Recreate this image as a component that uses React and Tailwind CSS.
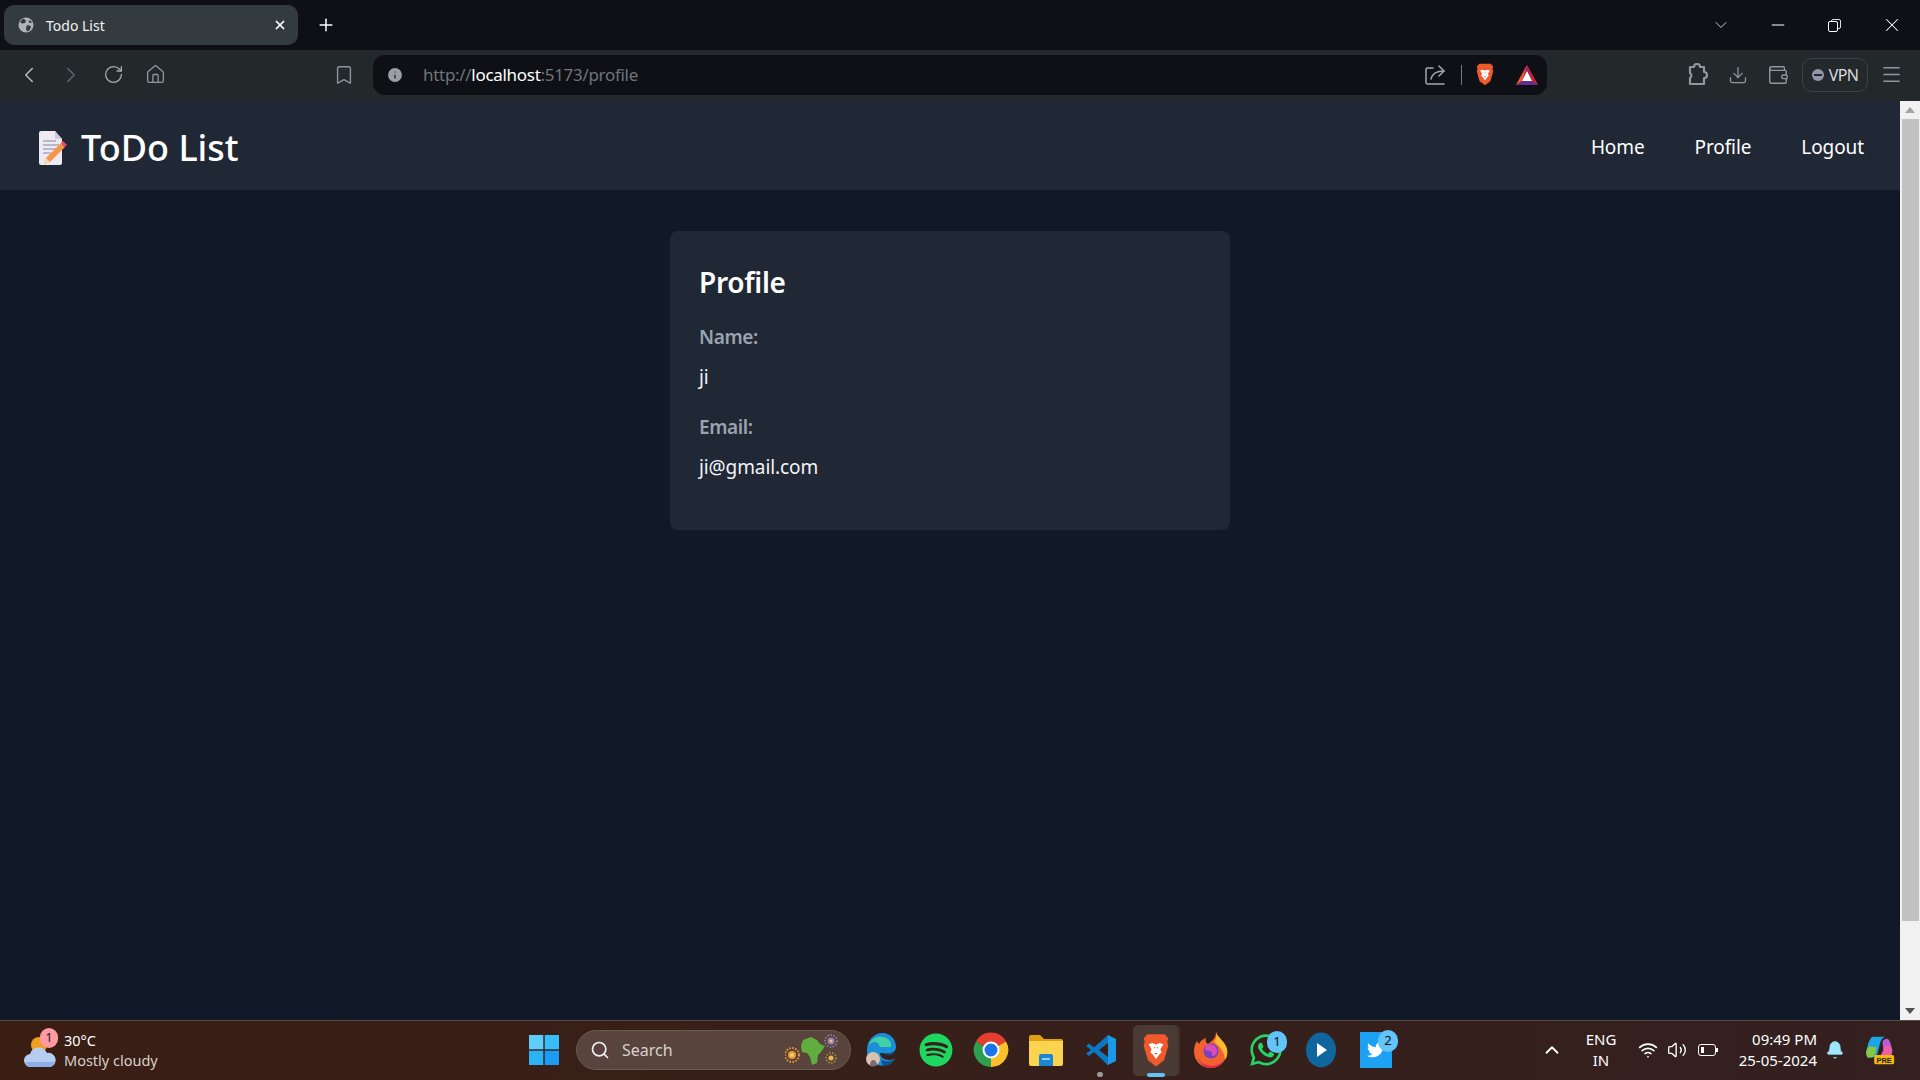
import {
  ChevronLeft,
  ChevronRight,
  RotateCw,
  Home,
  Bookmark,
  Info,
  Download,
  Wallet,
  Menu,
  X,
  Plus,
  ChevronDown,
  ChevronUp,
  Minus,
  Search,
  Wifi,
  Volume2,
  Bell,
} from 'lucide-react'
import { FaSpotify, FaWhatsapp, FaTwitter } from 'react-icons/fa'

const font = "font-['Noto_Sans','Open_Sans',sans-serif]"

function Globe() {
  return (
    <svg width="16" height="16" viewBox="0 0 16 16">
      <circle cx="8" cy="8" r="7.5" fill="#aeb3b6" />
      <path d="M5 1.5 8 3.5 7 6 4 6.5 2 5ZM9 8l4 1-1 4-3 1.500-1-3ZM12 3l2 2.500-2 .5-1.500-1.500Z" fill="#343b3e" />
    </svg>
  )
}

function ShareIcon() {
  return (
    <svg width="22" height="22" viewBox="0 0 22 22" fill="none" stroke="#a3a8ab" strokeWidth="1.500" strokeLinecap="round" strokeLinejoin="round">
      <path d="M9 4H3a2 2 0 0 0-1 2v13a2 2 0 0 0 2 1h16" />
      <path d="M7 15c1-5 5-8 13-8" />
      <path d="M15 2l5 5-5 5" />
    </svg>
  )
}

function BraveLogo({ size = 20 }) {
  return (
    <svg width={size} height={size * 1.16} viewBox="0 0 24 28">
      <path d="M5 1h14l3 3.500-1 2.500 1 3-3.500 12L12 27l-6.500-5L2 10l1-3-1-2.500Z" fill="#f0592b" />
      <path d="M6 9l3-1 3 1.200L15 8l3 1-2.500 4 1 2.500-2 2L12 21l-2.500-3.500-2-2 1-2.500Z" fill="#fff" />
      <path d="M10 11.500h1.500l-.7 1.200ZM12.500 11.500H14l-.8 1.200ZM10.500 16h3L12 17.500Z" fill="#f0592b" />
    </svg>
  )
}

function BatLogo() {
  return (
    <svg width="24" height="22" viewBox="0 0 24 22">
      <path d="M12 1 23 21H1Z" fill="#9e1f63" />
      <path d="M12 1 1 21l6-4Z" fill="#f15a22" />
      <path d="M12 1 23 21l-6-4Z" fill="#c1272d" />
      <path d="M1 21h22l-6-4H7Z" fill="#662d91" />
      <path d="M12 7l5 10H7Z" fill="#fff" />
    </svg>
  )
}

function Memo() {
  return (
    <svg width="30" height="34" viewBox="0 0 30 34">
      <path d="M2 2a2 2 0 0 1 2-2h14l7 8v24a2 2 0 0 1-2 2H4a2 2 0 0 1-2-2Z" fill="#eeeaf4" />
      <path d="M18 0l7 8h-7Z" fill="#cfcad9" />
      <path d="M6 10h13M6 14h16M6 18h13M6 22h8" stroke="#a9a6b6" strokeWidth="1.600" />
      <path d="M24 12l4 4-15 15-6 2 2-6Z" fill="#f4974b" />
      <path d="M24 12l2-2 4 4-2 2Z" fill="#e8486a" />
      <path d="M9 27l4 4-6 2Z" fill="#f7d9ae" />
    </svg>
  )
}

function WindowsLogo() {
  return (
    <svg width="30" height="30" viewBox="0 0 30 30">
      <rect x="0" y="0" width="14.300" height="14.300" fill="#5fcdfb" />
      <rect x="15.700" y="0" width="14.300" height="14.300" fill="#38bdfb" />
      <rect x="0" y="15.700" width="14.300" height="14.300" fill="#2cb3f6" />
      <rect x="15.700" y="15.700" width="14.300" height="14.300" fill="#1a9cf2" />
    </svg>
  )
}

function Weather() {
  return (
    <svg width="32" height="38" viewBox="0 0 32 38">
      <circle cx="15" cy="14" r="8" fill="#f0a020" />
      <path d="M7 36a6.500 6.500 0 0 1-1-13 9 9 0 0 1 17-1 7 7 0 0 1 3 14Z" fill="#b4cdf0" />
      <path d="M7 36a6.500 6.500 0 0 1-6-5h30a7 7 0 0 1-5 5Z" fill="#8fb0e6" />
    </svg>
  )
}

function SearchArt() {
  return (
    <svg width="56" height="34" viewBox="0 0 56 34">
      <path d="M18 7l8-3 6 3 3 4 5 2-4 6-3 3-1 8-5 2-2-8-3-4-5-1-1-6Z" fill="#5fae3e" />
      <circle cx="7" cy="22" r="7" fill="none" stroke="#e8963a" strokeWidth="2" strokeDasharray="1.500 1.500" />
      <circle cx="7" cy="22" r="4" fill="#e8963a" />
      <circle cx="7" cy="22" r="2" fill="#f6cf5d" />
      <circle cx="46" cy="8" r="6" fill="none" stroke="#9b7fb8" strokeWidth="1.500" strokeDasharray="1.500 1.500" />
      <circle cx="46" cy="8" r="3.500" fill="#9b7fb8" />
      <circle cx="46" cy="8" r="1.500" fill="#e9c66c" />
      <circle cx="46" cy="25" r="5" fill="none" stroke="#b98c4a" strokeWidth="1.500" strokeDasharray="1.500 1.500" />
      <circle cx="46" cy="25" r="2.500" fill="#e8b84a" />
    </svg>
  )
}

function EdgeLogo() {
  return (
    <svg width="32" height="36" viewBox="0 0 32 36">
      <path d="M2 17C3 6 11 1 17 1c9 0 14 7 14 14 0 4-3 6-7 6h-9c0 4 4 7 9 7 2 0 4-.5 6-1.500-3 5-7 7-12 7C8 34 1 27 2 17Z" fill="#1b8fd8" />
      <path d="M3 14C6 6 12 4 18 5c6 1 9 5 8 10h-11C13 8 7 9 3 14Z" fill="#3fd0a8" />
      <path d="M15 21h9c2 0 4-.500 5.500-2-1 3-3 4-6 4ZM16 27c3 3 8 3 14 0-3 5-7 7-12 7Z" fill="#11508f" />
      <circle cx="8" cy="27" r="7" fill="#d9c3ae" />
      <path d="M5 34c0-4 1-6 3-6s4 2 4 5a7 7 0 0 1-7 1Z" fill="#7d6a70" />
    </svg>
  )
}

function ChromeLogo() {
  return (
    <svg width="36" height="36" viewBox="0 0 36 36">
      <path d="M18 18 3 9.500A17 17 0 0 1 33 9.500Z" fill="#e53e30" />
      <path d="M18 18 33 9.500A17 17 0 0 1 18 35Z" fill="#fbc02d" />
      <path d="M18 18 18 35A17 17 0 0 1 3 9.500Z" fill="#2e9e4f" />
      <circle cx="18" cy="18" r="8.500" fill="#fff" />
      <circle cx="18" cy="18" r="6.500" fill="#1a73e8" />
    </svg>
  )
}

function FolderLogo() {
  return (
    <svg width="36" height="32" viewBox="0 0 36 32">
      <path d="M1 3a2 2 0 0 1 2-2h9l4 4h17a2 2 0 0 1 2 2v4H1Z" fill="#e0a010" />
      <path d="M1 7h34v23a2 2 0 0 1-2 2H3a2 2 0 0 1-2-2Z" fill="#fbd34f" />
      <path d="M11 22a2 2 0 0 1 2-2h10a2 2 0 0 1 2 2v10H11Z" fill="#1d86d0" />
      <path d="M14 25h8" stroke="#8fd0f5" strokeWidth="2" />
    </svg>
  )
}

function VsCodeLogo() {
  return (
    <svg width="32" height="32" viewBox="0 0 32 32">
      <path d="M23 1l8 4v22l-8 4-13-13.500 13-9.500Z" fill="#1c98e8" />
      <path d="M23 1v30L9 18l-5 4-3-2.500L6 16 1 12l3-2.500 5 4Z" fill="#0b78c4" />
      <path d="M23 9 14 16l9 7Z" fill="#3a1e14" />
    </svg>
  )
}

function FirefoxLogo() {
  return (
    <svg width="36" height="38" viewBox="0 0 36 38">
      <path d="M23 1c1 5 9 9 11 17 1 10-6 19-16 19S1 30 1 20c0-4 1-7 3-10l2 3c1-3 4-5 7-6-1 3 0 5 2 6 4-3 8-6 8-12Z" fill="#f2622e" />
      <path d="M23 1c1 5 9 9 11 17 1 4 0 8-2 11 0-9-6-14-11-18 2-3 3-6 2-10Z" fill="#fbb92f" />
      <path d="M5 27c3 6 9 8 14 8 5 0 10-3 13-7-3 6-8 9-14 9-6 0-11-4-13-10Z" fill="#e3224f" />
      <circle cx="18" cy="20" r="7.500" fill="#7b3fc2" />
      <path d="M13 14c5-2 11 1 11 6 0 3-2 5-5 5 1-3-1-6-6-5-1-2-1-4 0-6Z" fill="#d84fb3" />
    </svg>
  )
}

function PlayLogo() {
  return (
    <svg width="32" height="36" viewBox="0 0 32 36">
      <ellipse cx="16" cy="18" rx="15" ry="17.500" fill="#0f659e" />
      <path d="M12 11l10 7-10 7Z" fill="#fff" />
    </svg>
  )
}

function CopilotLogo() {
  return (
    <svg width="30" height="30" viewBox="0 0 36 36">
      <path d="M10 2h14c-3 1-5 4-6 8l-3 12c-1 3-3 5-6 5H3c-2-3-2-8 0-13 1-6 4-12 7-12Z" fill="#1aa6e6" />
      <path d="M3 16c2-3 4-3 6-2l5 1-2 8c-1 3-3 4-6 4H3c-2-4-2-8 0-11Z" fill="#8ac63f" />
      <path d="M21 8c2-3 4-4 7-3 2 2 3 6 4 10 2 5 0 10-3 11H16c3-1 5-4 6-8Z" fill="#b75bd8" />
      <path d="M24 13h6c2 3 3 7 2 10-2 3-5 3-9 3h-7c3-1 5-4 6-8Z" fill="#ef5fa7" />
      <rect x="11" y="24" width="24" height="11" rx="2" fill="#f3b70e" />
      <text x="23" y="33" textAnchor="middle" fontSize="9" fontWeight="800" fill="#222" fontFamily="Liberation Sans">PRE</text>
    </svg>
  )
}

// fixed-width slot so the icons keep even spacing in the bars
function Slot({ className = 'w-[42px]', children }) {
  return <div className={`flex h-full shrink-0 items-center justify-center ${className}`}>{children}</div>
}

function TabStrip() {
  return (
    <div className="flex h-[50px] shrink-0 items-center bg-[#0e1015] pl-1 text-white">
      <div className="flex h-10 w-[294px] items-center rounded-[10px] bg-[#343b3e] pl-[14px] pr-[11px]">
        <Globe />
        <span className="ml-3 flex-1 text-[14px] text-[#f1f2f2]">Todo List</span>
        <X size={14} strokeWidth={3} />
      </div>
      <Slot className="ml-[7px] w-[42px]">
        <Plus size={20} strokeWidth={1.800} />
      </Slot>
      <div className="flex-1" />
      <Slot className="w-[57px]">
        <ChevronDown size={20} strokeWidth={1.2} className="text-[#c8cacc]" />
      </Slot>
      <Slot className="w-[57px]">
        <Minus size={20} strokeWidth={1.2} />
      </Slot>
      <Slot className="w-[57px]">
        <div className="relative h-[13px] w-[13px]">
          <div className="absolute left-[3px] top-0 h-[10px] w-[10px] rounded-[2px] border border-[#ddd]" />
          <div className="absolute bottom-0 left-0 h-[11px] w-[10px] rounded-[2px] border border-white bg-[#0e1015]" />
        </div>
      </Slot>
      <Slot className="w-[57px]">
        <X size={22} strokeWidth={1.1} />
      </Slot>
    </div>
  )
}

function Toolbar() {
  const icon = 'text-[#8f979c]'
  return (
    <div className="flex h-[51px] shrink-0 items-center bg-[#23282b] pb-[2px] pl-2">
      <Slot>
        <ChevronLeft size={26} strokeWidth={1.4} className="text-[#b5babd]" />
      </Slot>
      <Slot>
        <ChevronRight size={26} strokeWidth={1.4} className="text-[#5f666a]" />
      </Slot>
      <Slot>
        <RotateCw size={21} strokeWidth={1.5} className="text-[#a3a8ab]" />
      </Slot>
      <Slot>
        <Home size={21} strokeWidth={1.5} className={icon} />
      </Slot>
      <Slot className="ml-[157px]">
        <Bookmark size={22} strokeWidth={1.5} className={icon} />
      </Slot>
      <div className="ml-[18px] flex h-10 w-[1174px] items-center rounded-[12px] bg-[#0e1015] pl-[13px] pr-[8px]">
        <Info size={18} fill="#9aa0a4" strokeWidth={1.500} className="text-[#0e1015]" />
        <span className="ml-[19px] flex-1 text-[17px] tracking-[-0.3px] text-[#6f757a]">
          http://<span className="text-white">localhost</span>:5173/profile
        </span>
        <ShareIcon />
        <div className="ml-[15px] h-5 w-px bg-[#70767a]" />
        <div className="ml-[13px]">
          <BraveLogo />
        </div>
        <div className="ml-[20px]">
          <BatLogo />
        </div>
      </div>
      <Slot className="ml-[129px] w-[42px]">
        <svg width="22" height="24" viewBox="0 0 22 24" fill="none" stroke="#8f979c" strokeWidth="2.200">
          <path d="M4 4h4a3 3 0 0 1 6 0h4v5a2.500 2.500 0 0 1 0 6v6H4v-6a3 3 0 0 0 0-5Z" strokeLinejoin="round" />
        </svg>
      </Slot>
      <Slot className="ml-[2px] w-9">
        <Download size={20} strokeWidth={1.5} className={icon} />
      </Slot>
      <Slot className="ml-1 w-9">
        <Wallet size={22} strokeWidth={1.5} className={icon} />
      </Slot>
      <div className="ml-[6px] flex h-[34px] w-[66px] items-center justify-center gap-[5px] rounded-[10px] border border-[#3c4245] text-[16px] tracking-[-0.6px] text-[#d9dcde]">
        <div className="flex h-3 w-3 items-center justify-center rounded-full bg-[#8f97a8]">
          <div className="h-[2px] w-2 bg-[#23282b]" />
        </div>
        VPN
      </div>
      <Slot className="ml-[2px] w-[42px]">
        <Menu size={23} strokeWidth={1.4} className={icon} />
      </Slot>
    </div>
  )
}

function Navbar() {
  return (
    <nav className="flex h-[89px] shrink-0 items-center justify-between bg-[#202836] pl-[37px] pr-[36px] pt-1 text-white">
      <div className="flex items-center gap-[14px]">
        <Memo />
        <span className="text-[36px] font-medium leading-none">ToDo List</span>
      </div>
      <div className="flex items-center gap-[50px] text-[19px] tracking-[-0.1px]">
        <a>Home</a>
        <a>Profile</a>
        <a>Logout</a>
      </div>
    </nav>
  )
}

function ProfileCard() {
  return (
    <div className="mx-auto mt-[41px] h-[299px] w-[560px] rounded-[8px] bg-[#202836] px-[29px] pt-[32px]">
      <h2 className="text-[28px] font-semibold leading-[38px] tracking-[-0.3px] text-white">Profile</h2>
      <div className="mt-[23px] text-[19px] font-semibold leading-[26px] tracking-[-0.4px] text-[#9ca3af]">Name:</div>
      <div className="mt-[14px] text-[19px] leading-[26px] tracking-[-0.2px] text-[#f3f4f6]">ji</div>
      <div className="mt-[24px] text-[19px] font-semibold leading-[26px] tracking-[-0.4px] text-[#9ca3af]">Email:</div>
      <div className="mt-[14px] text-[19px] leading-[26px] tracking-[-0.1px] text-[#f3f4f6]">ji@gmail.com</div>
    </div>
  )
}

function Scrollbar() {
  return (
    <div className="flex w-5 shrink-0 flex-col items-center bg-[#f1f1f1]">
      <div className="flex h-[18px] items-center justify-center">
        <div className="h-0 w-0 border-x-[5px] border-b-[6px] border-x-transparent border-b-[#a3a3a3]" />
      </div>
      <div className="h-[802px] w-[17px] bg-[#c1c1c1]" />
      <div className="flex-1" />
      <div className="flex h-[18px] items-center justify-center">
        <div className="h-0 w-0 border-x-[5px] border-t-[6px] border-x-transparent border-t-[#505050]" />
      </div>
    </div>
  )
}

function Badge({ n, className }) {
  return (
    <span className={`absolute flex h-[22px] w-[20px] items-center justify-center rounded-full bg-[#62c4f8] text-[13px] text-[#111] ${className}`}>
      {n}
    </span>
  )
}

function Taskbar() {
  return (
    <div className="flex h-[60px] shrink-0 items-center border-t border-[#544a46] bg-gradient-to-r from-[#3a1e14] to-[#33201f] pb-px text-white">
      {/* weather */}
      <div className="relative ml-6 flex h-full w-[32px] shrink-0 items-center">
        <Weather />
        <span className="absolute left-[16px] top-[7px] flex h-5 w-[18px] items-center justify-center rounded-full bg-[#ff9aa5] text-[13px] text-[#222]">
          1
        </span>
      </div>
      <div className="ml-2 w-[200px] text-[14.5px] leading-[20px]">
        <div>30°C</div>
        <div className="text-[#d6d0cd]">Mostly cloudy</div>
      </div>
      <div className="ml-[265px]">
        <WindowsLogo />
      </div>
      {/* search */}
      <div className="ml-[17px] flex h-10 w-[275px] items-center rounded-full border border-[#6a5a52] bg-[#58443c] pl-[13px] pr-[9px]">
        <Search size={20} strokeWidth={2} className="text-[#f0f0f0]" />
        <span className="ml-[12px] flex-1 text-[16px] text-[#d8d2ce]">Search</span>
        <SearchArt />
      </div>
      {/* pinned apps */}
      <div className="ml-[2px] flex h-full items-center">
        <Slot className="w-[55px]">
          <EdgeLogo />
        </Slot>
        <Slot className="w-[55px]">
          <FaSpotify size={34} color="#1ed760" />
        </Slot>
        <Slot className="w-[55px]">
          <ChromeLogo />
        </Slot>
        <Slot className="w-[55px]">
          <FolderLogo />
        </Slot>
        <div className="relative flex h-full w-[55px] shrink-0 items-center justify-center">
          <VsCodeLogo />
          <span className="absolute bottom-[2px] left-[24px] h-[5px] w-[6px] rounded-full bg-[#a09a98]" />
        </div>
        <div className="relative flex h-full w-[55px] shrink-0 items-center justify-center">
          <div className="absolute inset-x-[6px] bottom-[3px] top-[4px] translate-x-[3px] rounded-[5px] bg-[#43322c]" />
          <div className="absolute inset-x-[5px] bottom-[3px] top-[4px] rounded-[5px] bg-[#4a3a34]" />
          <div className="relative">
            <BraveLogo size={30} />
          </div>
          <span className="absolute bottom-[2px] left-[19px] h-1 w-[18px] rounded-full bg-[#62c4f8]" />
        </div>
        <Slot className="w-[55px]">
          <FirefoxLogo />
        </Slot>
        <div className="relative flex h-full w-[55px] shrink-0 items-center justify-center">
          <FaWhatsapp size={36} color="#25d366" />
          <Badge n="1" className="left-[29px] top-[10px]" />
        </div>
        <Slot className="w-[55px]">
          <PlayLogo />
        </Slot>
        <div className="relative flex h-full w-[55px] shrink-0 items-center justify-center">
          <div className="flex h-9 w-[32px] items-center justify-center bg-[#1da1f2]">
            <FaTwitter size={18} color="#fff" />
          </div>
          <Badge n="2" className="left-[30px] top-[9px]" />
        </div>
      </div>
      {/* tray */}
      <div className="ml-[138px]">
        <ChevronUp size={22} strokeWidth={2} />
      </div>
      <div className="ml-[15px] w-[46px] text-center text-[15px] leading-[21px]">
        <div>ENG</div>
        <div>IN</div>
      </div>
      <Wifi size={20} strokeWidth={2} className="ml-[14px]" />
      <Volume2 size={20} strokeWidth={1.6} className="ml-[9px]" />
      <div className="ml-[11px] flex items-center">
        <div className="flex h-3 w-[18px] items-center rounded-[3px] border border-white px-[2px]">
          <div className="h-[6px] w-[3px] bg-white" />
        </div>
        <div className="h-1 w-[2px] bg-white" />
      </div>
      <div className="ml-[15px] w-[84px] text-right text-[15px] leading-[21px]">
        <div>09:49 PM</div>
        <div className="whitespace-nowrap">25-05-2024</div>
      </div>
      <Bell size={20} fill="#9fe6ff" strokeWidth={1} className="ml-2 text-[#9fe6ff]" />
      <div className="ml-[20px]">
        <CopilotLogo />
      </div>
    </div>
  )
}

export default function App() {
  return (
    <div className={`flex h-screen flex-col overflow-hidden bg-[#111827] ${font}`}>
      <TabStrip />
      <Toolbar />
      <div className="flex min-h-0 flex-1">
        <main className="flex min-w-0 flex-1 flex-col">
          <Navbar />
          <ProfileCard />
        </main>
        <Scrollbar />
      </div>
      <Taskbar />
    </div>
  )
}
